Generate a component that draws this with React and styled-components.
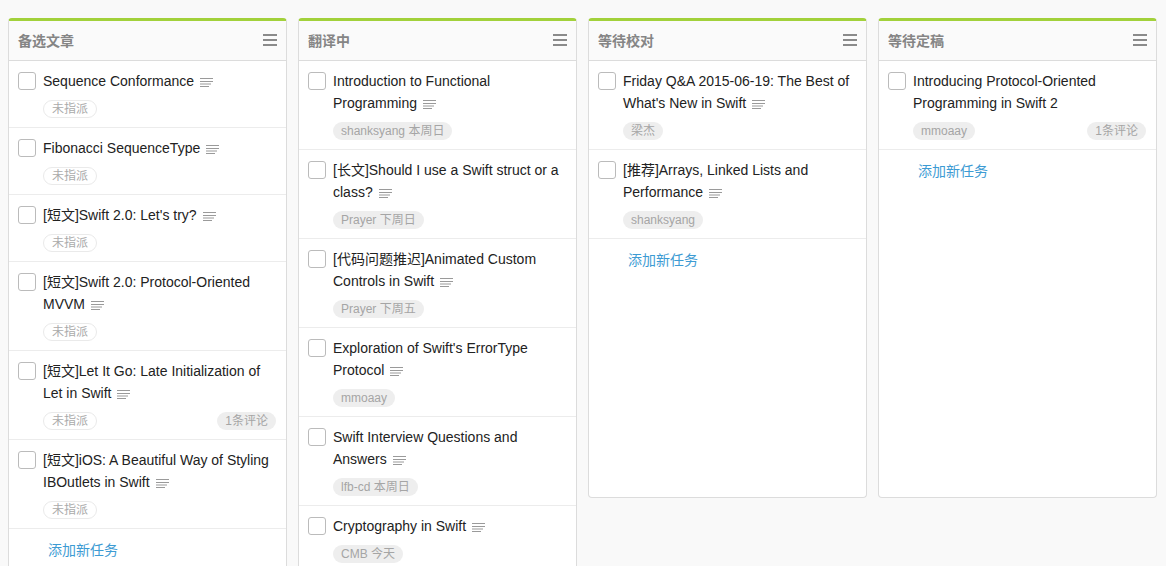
import React from "react";
import styled, { createGlobalStyle } from "styled-components";

const GlobalStyle = createGlobalStyle`
  html, body {
    margin: 0;
    padding: 0;
    background: #f9f9f9;
    font-family: "Liberation Sans", Arial, "Noto Sans CJK SC", sans-serif;
    overflow: hidden;
  }
  * {
    box-sizing: border-box;
  }
`;

const Board = styled.div`
  display: flex;
  align-items: flex-start;
  gap: 11px;
  padding: 18px 0 0 8px;
  height: 566px;
`;

const Column = styled.div`
  width: 279px;
  flex: none;
  min-height: 480px;
  background: #fff;
  border: 1px solid #dcdcdc;
  border-top: 3px solid #a2d13b;
  border-radius: 4px;
`;

const Header = styled.div`
  height: 40px;
  display: flex;
  align-items: center;
  justify-content: space-between;
  padding: 0 9px 2px 9px;
  background: #fafafa;
  border-bottom: 1px solid #dcdcdc;
`;

const Title = styled.h3`
  margin: 0;
  font-size: 14px;
  font-weight: bold;
  color: #858585;
`;

const Menu = styled.div`
  width: 14px;
  display: flex;
  flex-direction: column;
  gap: 3px;
  span {
    display: block;
    height: 2px;
    background: #8a8a8a;
  }
`;

const Item = styled.div`
  display: flex;
  gap: 7px;
  padding: 9px 10px 9px 9px;
  border-bottom: 1px solid #ececec;
`;

const Check = styled.div`
  width: 18px;
  height: 18px;
  flex: none;
  margin-top: 2px;
  border: 1px solid #bbb;
  border-radius: 3px;
  background: #fff;
`;

const Body = styled.div`
  flex: 1;
  min-width: 0;
`;

const Text = styled.div`
  font-size: 14px;
  line-height: 22px;
  color: #222;
`;

const Note = styled.svg`
  display: inline-block;
  vertical-align: -1px;
  margin-left: 6px;
`;

const Meta = styled.div`
  display: flex;
  justify-content: space-between;
  margin-top: 8px;
`;

const Tag = styled.span`
  display: inline-block;
  height: 18px;
  padding: 0 8px;
  border-radius: 9px;
  font-size: 12px;
  color: ${(p) => (p.$empty ? "#aaa" : "#a5a5a5")};
  background: ${(p) => (p.$empty ? "#fff" : "#eeeeee")};
  border: ${(p) => (p.$empty ? "1px solid #eaeaea" : "none")};
  line-height: ${(p) => (p.$empty ? "16px" : "18px")};
`;

const AddLink = styled.a`
  display: block;
  padding: 10px 0 9px 39px;
  font-size: 14px;
  line-height: 22px;
  color: #3d9bd3;
  text-decoration: none;
`;

const NoteIcon = () => (
  <Note width="13" height="10" viewBox="0 0 13 10">
    <g stroke="#9a9a9a" strokeWidth="1">
      <line x1="0" y1="1.5" x2="13" y2="1.5" />
      <line x1="0" y1="4.5" x2="13" y2="4.5" />
      <line x1="0" y1="7" x2="11" y2="7" />
      <line x1="0" y1="9.5" x2="9" y2="9.5" />
    </g>
  </Note>
);

const columns = [
  {
    title: "备选文章",
    items: [
      { text: "Sequence Conformance", note: true },
      { text: "Fibonacci SequenceType", note: true },
      { text: "[短文]Swift 2.0: Let's try?", note: true },
      { text: "[短文]Swift 2.0: Protocol-Oriented MVVM", note: true },
      { text: "[短文]Let It Go: Late Initialization of Let in Swift", note: true, comments: "1条评论" },
      { text: "[短文]iOS: A Beautiful Way of Styling IBOutlets in Swift", note: true },
    ],
    add: true,
  },
  {
    title: "翻译中",
    items: [
      { text: "Introduction to Functional Programming", note: true, tag: "shanksyang 本周日" },
      { text: "[长文]Should I use a Swift struct or a class?", note: true, tag: "Prayer 下周日" },
      { text: "[代码问题推迟]Animated Custom Controls in Swift", note: true, tag: "Prayer 下周五" },
      { text: "Exploration of Swift's ErrorType Protocol", note: true, tag: "mmoaay" },
      { text: "Swift Interview Questions and Answers", note: true, tag: "lfb-cd 本周日" },
      { text: "Cryptography in Swift", note: true, tag: "CMB 今天" },
    ],
  },
  {
    title: "等待校对",
    items: [
      { text: "Friday Q&A 2015-06-19: The Best of What's New in Swift", note: true, tag: "梁杰" },
      { text: "[推荐]Arrays, Linked Lists and Performance", note: true, tag: "shanksyang" },
    ],
    add: true,
  },
  {
    title: "等待定稿",
    items: [
      { text: "Introducing Protocol-Oriented Programming in Swift 2", tag: "mmoaay", comments: "1条评论" },
    ],
    add: true,
  },
];

export default function App() {
  return (
    <>
      <GlobalStyle />
      <Board>
        {columns.map((col) => (
          <Column key={col.title}>
            <Header>
              <Title>{col.title}</Title>
              <Menu>
                <span />
                <span />
                <span />
              </Menu>
            </Header>
            {col.items.map((it) => (
              <Item key={it.text}>
                <Check />
                <Body>
                  <Text>
                    {it.text}
                    {it.note && <NoteIcon />}
                  </Text>
                  <Meta>
                    {it.tag ? <Tag>{it.tag}</Tag> : <Tag $empty>未指派</Tag>}
                    {it.comments && <Tag>{it.comments}</Tag>}
                  </Meta>
                </Body>
              </Item>
            ))}
            {col.add && <AddLink href="#">添加新任务</AddLink>}
          </Column>
        ))}
      </Board>
    </>
  );
}
